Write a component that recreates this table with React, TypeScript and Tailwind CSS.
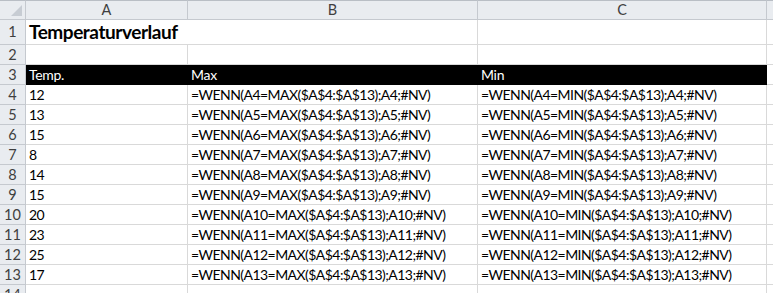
import React from "react";

const rows: [string, string, string][] = [
  ["12", "=WENN(A4=MAX($A$4:$A$13);A4;#NV)", "=WENN(A4=MIN($A$4:$A$13);A4;#NV)"],
  ["13", "=WENN(A5=MAX($A$4:$A$13);A5;#NV)", "=WENN(A5=MIN($A$4:$A$13);A5;#NV)"],
  ["15", "=WENN(A6=MAX($A$4:$A$13);A6;#NV)", "=WENN(A6=MIN($A$4:$A$13);A6;#NV)"],
  ["8", "=WENN(A7=MAX($A$4:$A$13);A7;#NV)", "=WENN(A7=MIN($A$4:$A$13);A7;#NV)"],
  ["14", "=WENN(A8=MAX($A$4:$A$13);A8;#NV)", "=WENN(A8=MIN($A$4:$A$13);A8;#NV)"],
  ["15", "=WENN(A9=MAX($A$4:$A$13);A9;#NV)", "=WENN(A9=MIN($A$4:$A$13);A9;#NV)"],
  ["20", "=WENN(A10=MAX($A$4:$A$13);A10;#NV)", "=WENN(A10=MIN($A$4:$A$13);A10;#NV)"],
  ["23", "=WENN(A11=MAX($A$4:$A$13);A11;#NV)", "=WENN(A11=MIN($A$4:$A$13);A11;#NV)"],
  ["25", "=WENN(A12=MAX($A$4:$A$13);A12;#NV)", "=WENN(A12=MIN($A$4:$A$13);A12;#NV)"],
  ["17", "=WENN(A13=MAX($A$4:$A$13);A13;#NV)", "=WENN(A13=MIN($A$4:$A$13);A13;#NV)"],
];

const rh =
  "flex items-center justify-center bg-[#e9ecf0] border-r border-b border-[#c5c9cf] text-[#3f3f3f] text-[14.5px]";
const cell =
  "flex items-center pl-[3px] border-r border-b border-[#d9d9d9] text-black text-[14px] tracking-[-0.55px] whitespace-nowrap overflow-hidden";
const blk =
  "flex items-center pl-[3px] bg-black text-white text-[14px] tracking-[-0.3px] whitespace-nowrap overflow-hidden border-b border-black";
const colh =
  "flex items-center justify-center bg-[#e9ecf0] border-r border-b border-[#c5c9cf] border-t border-t-[#b9bec5] text-[#3f3f3f] text-[14.5px]";

export default function App() {
  return (
    <div
      className="w-[773px] h-[293px] overflow-hidden bg-white"
      style={{ fontFamily: "Lato, 'Liberation Sans', sans-serif" }}
    >
      <div className="grid grid-cols-[26px_162px_290px_289px_1fr] grid-rows-[20px_25px_20px_repeat(11,20px)_20px]">
        {/* header row */}
        <div className="relative bg-[#e9ecf0] border-r border-b border-[#c5c9cf] border-t border-t-[#b9bec5]">
          <div className="absolute right-[3px] bottom-[3px] w-0 h-0 border-l-[11px] border-l-transparent border-b-[11px] border-b-[#c7ccd3]" />
        </div>
        <div className={colh}>A</div>
        <div className={colh}>B</div>
        <div className={colh}>C</div>
        <div className="bg-[#e9ecf0] border-b border-[#c5c9cf] border-t border-t-[#b9bec5]" />

        {/* row 1 */}
        <div className={rh}>1</div>
        <div className="flex items-center pl-[3px] border-b border-[#d9d9d9] text-black text-[19px] tracking-[-0.45px] font-bold whitespace-nowrap">
          Temperaturverlauf
        </div>
        <div className={cell} />
        <div className={cell} />
        <div className="border-b border-[#d9d9d9]" />

        {/* row 2 */}
        <div className={rh}>2</div>
        <div className={cell} />
        <div className={cell} />
        <div className={cell} />
        <div className="border-b border-[#d9d9d9]" />

        {/* row 3 */}
        <div className={rh}>3</div>
        <div className={blk}>Temp.</div>
        <div className={blk}>Max</div>
        <div className={blk}>Min</div>
        <div className="border-b border-[#d9d9d9]" />

        {rows.map((r, i) => (
          <React.Fragment key={i}>
            <div className={rh}>{i + 4}</div>
            <div className={cell}>{r[0]}</div>
            <div className={cell}>{r[1]}</div>
            <div className={cell}>{r[2]}</div>
            <div className="border-b border-[#d9d9d9]" />
          </React.Fragment>
        ))}

        <div className={rh}>14</div>
        <div className={cell} />
        <div className={cell} />
        <div className={cell} />
        <div className="border-b border-[#d9d9d9]" />
      </div>
    </div>
  );
}
